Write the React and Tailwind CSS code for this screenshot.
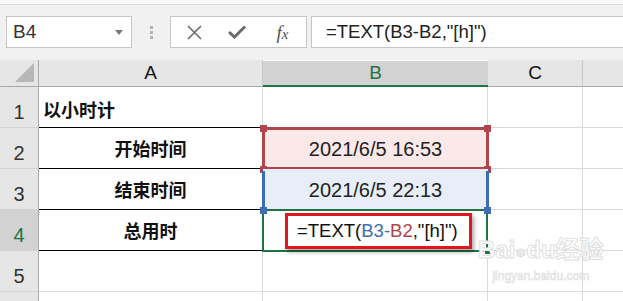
import React from 'react';

const GRID = 'border-r border-b border-[#dadada]';

const RowHead = ({ n, active }) => (
  <div
    className={`flex items-end justify-center pb-[5px] leading-none text-[20px] border-r border-[#ababab] border-b border-b-[#d4d4d4] ${
      active ? 'bg-[#d2d2d2] text-[#217346]' : 'bg-[#e6e6e6] text-[#333]'
    }`}
  >
    {n}
  </div>
);

const Corner = ({ pos, color }) => (
  <span className={`absolute w-[7px] h-[7px] ${pos} ${color}`} />
);

const App = () => {
  return (
    <div className="w-[623px] h-[301px] overflow-hidden bg-white relative font-['Liberation_Sans','Noto_Sans_CJK_SC',sans-serif] text-[#111]">
      {/* top strip */}
      <div className="h-[5px] bg-[#f7f7f7] border-b border-[#dcdcdc]" />

      {/* formula bar */}
      <div className="h-[55px] bg-[#f1f1f1] flex items-start pt-[11px]">
        {/* name box */}
        <div className="ml-[6px] w-[126px] h-[32px] bg-white border border-[#c6c6c6] flex items-center justify-between pl-[6px] pr-[8px]">
          <span className="text-[19px] text-[#333]">B4</span>
          <svg width="8" height="5" viewBox="0 0 8 5">
            <path d="M0 0 L8 0 L4 5 Z" fill="#777" />
          </svg>
        </div>
        {/* grip dots */}
        <div className="w-[38px] h-[32px] flex flex-col items-center justify-center gap-[2px]">
          <span className="w-[3px] h-[3px] bg-[#b5b5b5]" />
          <span className="w-[3px] h-[3px] bg-[#b5b5b5]" />
          <span className="w-[3px] h-[3px] bg-[#b5b5b5]" />
        </div>
        {/* buttons */}
        <div className="w-[137px] h-[32px] bg-white border border-[#c6c6c6] flex items-center">
          <div className="w-[44px] flex justify-center pl-[2px]">
            <svg width="15" height="15" viewBox="0 0 15 15">
              <path d="M1 1 L14 14 M14 1 L1 14" stroke="#6a6a6a" strokeWidth="1.6" />
            </svg>
          </div>
          <div className="w-[44px] flex justify-center">
            <svg width="18" height="14" viewBox="0 0 18 14">
              <path d="M1 7 L6.5 12 L17 1.5" stroke="#6a6a6a" strokeWidth="3" fill="none" />
            </svg>
          </div>
          <div className="w-[47px] flex justify-center">
            <span className="font-['Liberation_Serif',serif] italic text-[19px] text-[#555] leading-none">
              f<span className="text-[15px]">x</span>
            </span>
          </div>
        </div>
        {/* formula input */}
        <div className="ml-[4px] flex-1 h-[32px] bg-white border border-[#c6c6c6] border-r-0 flex items-center pl-[14px]">
          <span className="text-[18.5px] text-[#222]">=TEXT(B3-B2,"[h]")</span>
        </div>
      </div>

      {/* sheet */}
      <div className="grid grid-cols-[39px_224px_225px_95px_1fr] grid-rows-[27px_41px_41px_41px_41px_41px_41px]">
        {/* header */}
        <div className="bg-[#e6e6e6] border-r border-[#ababab] border-b border-b-[#a8a8a8] relative">
          <svg className="absolute right-[4px] bottom-[4px]" width="19" height="19" viewBox="0 0 19 19">
            <path d="M19 0 L19 19 L0 19 Z" fill="#b7b7b7" />
          </svg>
        </div>
        <div className="bg-[#e6e6e6] border-r border-[#c8c8c8] border-b border-b-[#a8a8a8] flex items-center justify-center text-[19px] text-[#111]">
          A
        </div>
        <div className="bg-[#d2d2d2] border-b-2 border-[#217346] flex items-center justify-center text-[19px] text-[#217346] mt-[1px]">
          B
        </div>
        <div className="bg-[#e6e6e6] border-r border-[#c8c8c8] border-b border-b-[#a8a8a8] flex items-center justify-center text-[19px] text-[#111]">
          C
        </div>
        <div className="bg-[#e6e6e6] border-b border-b-[#a8a8a8]" />

        {/* row 1 */}
        <RowHead n="1" />
        <div className="border-r border-[#dadada] border-b border-b-black flex items-end pl-[4px] pb-[9px] leading-none font-bold text-[18px] font-['Noto_Sans_CJK_SC',sans-serif]">
          以小时计
        </div>
        <div className="border-r border-[#dadada] border-b border-b-black" />
        <div className={GRID} />
        <div className="border-b border-[#dadada]" />

        {/* row 2 */}
        <RowHead n="2" />
        <div className="border-r border-[#dadada] border-b border-b-black flex items-center justify-center font-bold text-[18px] font-['Noto_Sans_CJK_SC',sans-serif]">
          开始时间
        </div>
        <div className="relative bg-[#fbe9ea] flex items-center justify-center text-[20px] text-[#222]">
          <div className="absolute -top-[1px] -left-[1px] -right-[1px] -bottom-[1px] border-[3px] border-[#b0454d]" />
          <Corner pos="-top-[3px] -left-[3px]" color="bg-[#b0454d]" />
          <Corner pos="-top-[3px] -right-[3px]" color="bg-[#b0454d]" />
          <Corner pos="-bottom-[4px] -left-[3px]" color="bg-[#b0454d]" />
          <Corner pos="-bottom-[4px] -right-[3px]" color="bg-[#b0454d]" />
          <span className="relative">2021/6/5 16:53</span>
        </div>
        <div className={GRID} />
        <div className="border-b border-[#dadada]" />

        {/* row 3 */}
        <RowHead n="3" />
        <div className="border-r border-[#dadada] border-b border-b-black flex items-center justify-center font-bold text-[18px] font-['Noto_Sans_CJK_SC',sans-serif]">
          结束时间
        </div>
        <div className="relative bg-[#e8eef8] flex items-center justify-center text-[20px] text-[#222]">
          <div className="absolute top-[2px] -left-[1px] -right-[1px] bottom-0 border-l-[3px] border-r-[3px] border-[#3d6db5]" />
          <Corner pos="-bottom-[4px] -left-[3px] z-10" color="bg-[#3d6db5]" />
          <Corner pos="-bottom-[4px] -right-[3px] z-10" color="bg-[#3d6db5]" />
          <span className="relative">2021/6/5 22:13</span>
        </div>
        <div className={GRID} />
        <div className="border-b border-[#dadada]" />

        {/* row 4 */}
        <RowHead n="4" active />
        <div className="border-r border-[#dadada] border-b border-b-black flex items-center justify-center font-bold text-[18px] font-['Noto_Sans_CJK_SC',sans-serif]">
          总用时
        </div>
        <div className="relative flex items-center pl-[22px]">
          <div className="absolute -top-[1px] -left-[1px] right-0 -bottom-[1px] border-2 border-[#217346]" />
          <span className="absolute -right-[3px] -bottom-[4px] w-[7px] h-[7px] bg-[#217346] border border-white" />
          <div className="relative w-[187px] h-[36px] border-[3px] border-[#e2161d] shadow-[2px_3px_4px_rgba(0,0,0,0.35)] flex items-center pl-[9px] text-[18.5px] text-[#111]">
            =TEXT(<span className="text-[#3d6db5]">B3</span>
            <span className="text-[#3d6db5]">-</span>
            <span className="text-[#b0454d]">B2</span>,"[h]")
          </div>
        </div>
        <div className={GRID} />
        <div className="border-b border-[#dadada]" />

        {/* row 5 */}
        <RowHead n="5" />
        <div className={GRID} />
        <div className={GRID} />
        <div className={GRID} />
        <div className="border-b border-[#dadada]" />

        {/* row 6 (only its top edge is visible) */}
        <RowHead n="" />
        <div className={GRID} />
        <div className={GRID} />
        <div className={GRID} />
        <div className="border-b border-[#dadada]" />
      </div>

      {/* watermark */}
      <div className="absolute left-[478px] top-[238px] flex flex-col items-center pointer-events-none whitespace-nowrap">
        <span className="text-[24px] font-bold leading-none text-white [-webkit-text-stroke:1px_#dedede] font-['Liberation_Sans','Noto_Sans_CJK_SC',sans-serif]">
          Bai<span className="text-[#eaeaea] text-[18px]">●</span>du经验
        </span>
        <span className="text-[12px] leading-none mt-[8px] text-white [-webkit-text-stroke:0.6px_#dcdcdc]">
          jingyan.baidu.com
        </span>
      </div>
    </div>
  );
};

export default App;
